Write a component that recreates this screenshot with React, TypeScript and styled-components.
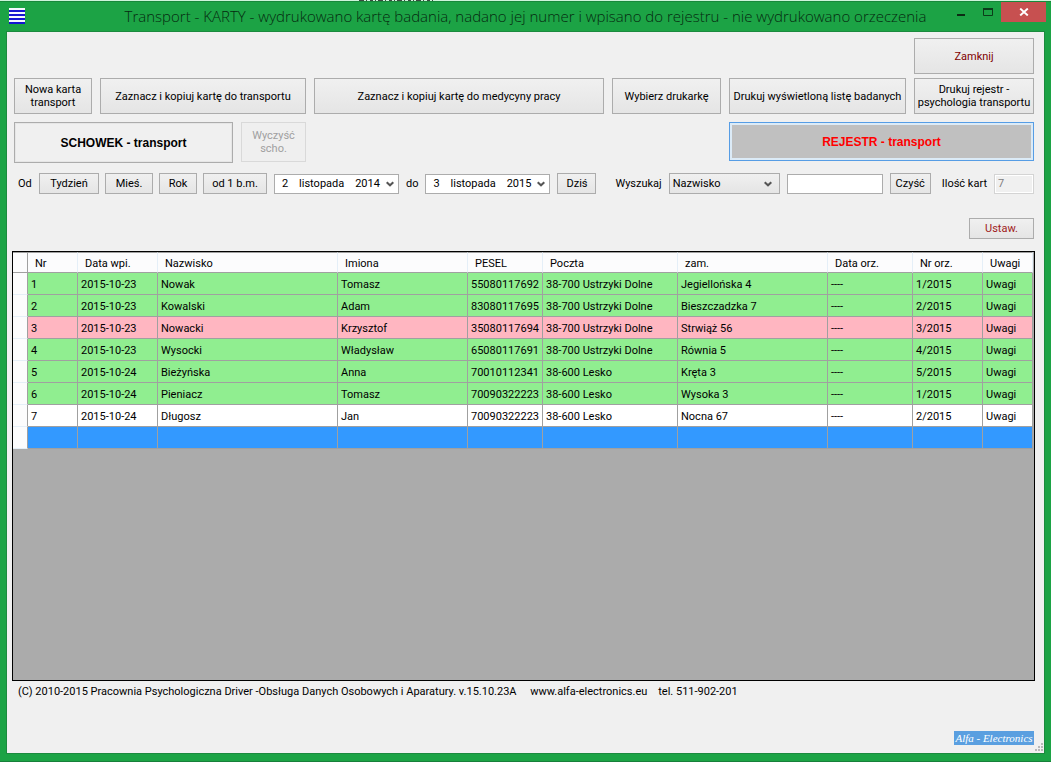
import React from "react";
import styled, { createGlobalStyle, css } from "styled-components";

const GlobalStyle = createGlobalStyle`
  *, *::before, *::after { box-sizing: border-box; }
  body {
    margin: 0;
    background: #ffffff;
    color: #000000;
    font-family: Roboto, "Liberation Sans", Arial, sans-serif;
    font-size: 11px;
    line-height: 13px;
  }
  button, input, select { font: inherit; color: inherit; margin: 0; }
`;

const Page = styled.div`
  display: flex;
  flex-direction: column;
  min-height: 100vh;
  padding: 0 3px 2px 0;
`;

const Backdrop = styled.div`
  height: 1px;
  background: #cdf5da;
  svg { display: block; margin-left: 359px; }
`;

const Window = styled.div`
  flex: 1;
  display: flex;
  flex-direction: column;
  padding: 0 6px 7px;
  background: #1ca345;
  border-top: 1px solid #17893a;
  border-bottom: 1px solid #17803a;
`;

const TitleBar = styled.header`
  display: grid;
  grid-template-columns: 1fr auto 1fr;
  height: 29px;
`;

const AppIcon = styled.svg`
  display: block;
  margin: 6px 0 0 3px;
`;

const Title = styled.h1`
  margin: 0;
  font: 300 15px/29px "Open Sans", "Noto Sans", sans-serif;
  color: #062a10;
  white-space: nowrap;
`;

const WindowButtons = styled.div`
  display: flex;
  justify-content: flex-end;
  align-items: flex-start;
  margin-right: -1px;
`;

const WindowButton = styled.button<{ $close?: boolean }>`
  display: grid;
  place-items: center;
  width: ${(p) => (p.$close ? 45 : 27)}px;
  height: 20px;
  padding: 0;
  border: 0;
  background: ${(p) => (p.$close ? "#c75050" : "transparent")};
`;

const Client = styled.main`
  flex: 1;
  display: flex;
  flex-direction: column;
  background: #f0f0f0;
  border: 1px solid #1b8a3e;
  padding: 6px 10px 0 7px;
`;

const ButtonGrid = styled.div`
  display: grid;
  grid-template-columns: 78px 206px minmax(200px, 1fr) 109px 177px 120px;
  grid-auto-rows: 36px;
  gap: 4px 8px;
`;

const Button = styled.button<{ $tone?: string; $lastColumn?: boolean }>`
  padding: 0;
  border: 1px solid #acacac;
  background: linear-gradient(#f0f0f0, #e5e5e5);
  color: ${(p) => p.$tone ?? "#000000"};
  ${(p) => p.$lastColumn && css`grid-column: -2;`}
  &:disabled {
    border-color: #d9d9d9;
    background: #efefef;
    color: #a0a0a0;
  }
`;

const SmallButton = styled(Button)<{ $width: number }>`
  flex: none;
  width: ${(p) => p.$width}px;
  height: 21px;
  padding: 0;
`;

const ModeRow = styled.div`
  display: flex;
  align-items: flex-start;
  gap: 8px;
  margin-top: 8px;
`;

const ModeButton = styled(Button)<{ $active?: boolean }>`
  width: ${(p) => (p.$active ? 305 : 219)}px;
  height: ${(p) => (p.$active ? 39 : 41)}px;
  font: bold 12px/14px "Liberation Sans", Arial, sans-serif;
  background: #f0f0f0;
  box-shadow: inset 0 0 0 1px #e6e6e6;
  ${(p) =>
    p.$active &&
    css`
      margin-left: auto;
      border-color: #569de5;
      background: #c0c0c0;
      box-shadow: inset 0 0 0 2px #dcebf7;
      color: #ff0000;
    `}
`;

const ClearButton = styled(Button)`
  width: 65px;
  height: 40px;
  padding: 0 8px;
`;

const FilterRow = styled.div`
  display: flex;
  align-items: center;
  justify-content: space-between;
  margin-top: 10px;
`;

const FilterGroup = styled.div<{ $tight?: boolean }>`
  display: flex;
  align-items: center;
  gap: ${(p) => (p.$tight ? 6 : 7)}px;
`;

const Label = styled.label`
  white-space: nowrap;
`;

const StartLabel = styled(Label)`
  width: 19px;
  padding-left: 4px;
`;

const CountLabel = styled(Label)`
  padding-left: 4px;
`;

const DateBox = styled.div`
  display: flex;
  align-items: center;
  width: 125px;
  height: 20px;
  border: 1px solid #acacac;
  background: #ffffff;
`;

const DateInput = styled.input`
  flex: 1;
  min-width: 0;
  padding: 0 0 0 7px;
  border: 0;
  background: transparent;
  outline: none;
`;

const DropButton = styled.button`
  display: grid;
  place-items: center;
  width: 16px;
  height: 18px;
  padding: 0;
  border: 0;
  background: transparent;
`;

const SelectBox = styled.div`
  display: grid;
  grid-template-columns: 1fr 16px;
  align-items: center;
  width: 111px;
  height: 21px;
  svg { grid-area: 1 / 2; pointer-events: none; z-index: 1; }
`;

const Select = styled.select`
  grid-area: 1 / 1 / 2 / 3;
  height: 21px;
  padding: 0 3px;
  appearance: none;
  border: 1px solid #acacac;
  border-radius: 0;
  background: linear-gradient(#f0f0f0, #e5e5e5);
`;

const TextInput = styled.input<{ $width: number }>`
  width: ${(p) => p.$width}px;
  height: 20px;
  padding: 0 3px;
  border: 1px solid #acacac;
  background: #ffffff;
  &:disabled {
    border-color: #d4d4d4;
    background: #f0f0f0;
    box-shadow: inset 0 0 0 1px #ffffff;
    color: #808080;
  }
`;

const SettingsRow = styled.div`
  display: flex;
  justify-content: flex-end;
  margin: 24px 0 12px;
`;

const GridPanel = styled.section`
  flex: 1;
  min-height: 200px;
  margin: 0 -1px 0 -2px;
  padding-right: 1px;
  border: 1px solid #000000;
  background: #ababab;
`;

const Table = styled.table`
  width: 100%;
  table-layout: fixed;
  border-collapse: separate;
  border-spacing: 0;
  text-align: left;
`;

const HeadCell = styled.th`
  height: 21px;
  padding: 1px 0 0 7px;
  border-right: 1px solid #e5eff8;
  border-bottom: 1px solid #a0a0a0;
  border-top: 1px solid #a0a0a0;
  background: #fcfcfd;
  font-weight: normal;
  white-space: nowrap;
  &:first-child { border-right-color: #a0a0a0; }
`;

type Tone = "done" | "alert" | "plain" | "selected";
const tones: Record<Tone, string> = {
  done: "#90ee90",
  alert: "#ffb6c1",
  plain: "#ffffff",
  selected: "#3399ff",
};

const Row = styled.tr<{ $tone: Tone }>`
  background: ${(p) => tones[p.$tone]};
`;

const Cell = styled.td`
  height: 22px;
  padding: 1px 0 0 3px;
  border-right: 1px solid #a0a0a0;
  border-bottom: 1px solid #a0a0a0;
  white-space: nowrap;
`;

const RowHeader = styled(Cell)`
  border-bottom-color: #e5eff8;
  background: #fcfcfd;
`;

const Footer = styled.footer`
  display: flex;
  flex-direction: column;
  justify-content: space-between;
  height: 72px;
  padding: 4px 0 0 4px;
`;

const Copyright = styled.p`
  margin: 0;
  white-space: pre;
`;

const BrandRow = styled.div`
  display: flex;
  justify-content: flex-end;
  align-items: flex-end;
  gap: 1px;
  margin-right: -9px;
`;

const Brand = styled.span`
  width: 80px;
  height: 14px;
  margin-bottom: 8px;
  background: #5a9fe0;
  color: #ffffff;
  font: italic 11px/14px "Liberation Serif", "Times New Roman", serif;
  text-align: center;
  white-space: nowrap;
`;

const Grip = styled.svg`
  display: block;
  margin-bottom: 2px;
`;

const Chevron = () => (
  <svg width="8" height="6" viewBox="0 0 8 6" aria-hidden="true">
    <path d="M0.7 1.2 4 4.3 7.3 1.2" fill="none" stroke="#555555" strokeWidth="2" />
  </svg>
);

const DateField = ({ id, value }: { id: string; value: string }) => (
  <DateBox>
    <DateInput id={id} defaultValue={value} />
    <DropButton aria-label="Wybierz datę">
      <Chevron />
    </DropButton>
  </DateBox>
);

const columns: [string, number][] = [
  ["Nr", 50],
  ["Data wpi.", 80],
  ["Nazwisko", 180],
  ["Imiona", 130],
  ["PESEL", 75],
  ["Poczta", 135],
  ["zam.", 150],
  ["Data orz.", 85],
  ["Nr orz.", 70],
  ["Uwagi", 50],
];

const records: { tone: Tone; cells: string[] }[] = [
  { tone: "done", cells: ["1", "2015-10-23", "Nowak", "Tomasz", "55080117692", "38-700 Ustrzyki Dolne", "Jegiellońska 4", "----", "1/2015", "Uwagi"] },
  { tone: "done", cells: ["2", "2015-10-23", "Kowalski", "Adam", "83080117695", "38-700 Ustrzyki Dolne", "Bieszczadzka 7", "----", "2/2015", "Uwagi"] },
  { tone: "alert", cells: ["3", "2015-10-23", "Nowacki", "Krzysztof", "35080117694", "38-700 Ustrzyki Dolne", "Strwiąż 56", "----", "3/2015", "Uwagi"] },
  { tone: "done", cells: ["4", "2015-10-23", "Wysocki", "Władysław", "65080117691", "38-700 Ustrzyki Dolne", "Równia 5", "----", "4/2015", "Uwagi"] },
  { tone: "done", cells: ["5", "2015-10-24", "Bieżyńska", "Anna", "70010112341", "38-600 Lesko", "Kręta 3", "----", "5/2015", "Uwagi"] },
  { tone: "done", cells: ["6", "2015-10-24", "Pieniacz", "Tomasz", "70090322223", "38-600 Lesko", "Wysoka 3", "----", "1/2015", "Uwagi"] },
  { tone: "plain", cells: ["7", "2015-10-24", "Długosz", "Jan", "70090322223", "38-600 Lesko", "Nocna 67", "----", "2/2015", "Uwagi"] },
  { tone: "selected", cells: columns.map(() => "") },
];

export default function App() {
  return (
    <Page>
      <GlobalStyle />
      <Backdrop>
        <svg width="76" height="1" aria-hidden="true">
          <path d="M0 .5H76" stroke="#3c4a40" strokeDasharray="5 2 1 3 3 2 1 2" />
        </svg>
      </Backdrop>
      <Window>
        <TitleBar>
          <AppIcon width="16" height="16" aria-hidden="true">
            <rect width="16" height="16" fill="#f4f8ff" />
            <path d="M0 3H16M0 7H16M0 11H16M0 15H16" stroke="#1414d2" strokeWidth="2" />
          </AppIcon>
          <Title>
            Transport - KARTY - wydrukowano kartę badania, nadano jej numer i wpisano do rejestru - nie wydrukowano orzeczenia
          </Title>
          <WindowButtons>
            <WindowButton aria-label="Minimalizuj">
              <svg width="8" height="8"><path d="M0 7H8" stroke="#0c2c14" strokeWidth="2" /></svg>
            </WindowButton>
            <WindowButton aria-label="Maksymalizuj">
              <svg width="10" height="8">
                <path d="M.5 1V7.5H9.5V1" fill="none" stroke="#0c3c1a" />
                <path d="M0 1H10" stroke="#0c3c1a" strokeWidth="2" />
              </svg>
            </WindowButton>
            <WindowButton $close aria-label="Zamknij okno">
              <svg width="10" height="8"><path d="M1.2.6 8.8 7.4M8.8.6 1.2 7.4" stroke="#ffffff" strokeWidth="2" /></svg>
            </WindowButton>
          </WindowButtons>
        </TitleBar>
        <Client>
          <ButtonGrid>
            <Button $tone="#800000" $lastColumn>Zamknij</Button>
            <Button>Nowa karta transport</Button>
            <Button>Zaznacz i kopiuj kartę do transportu</Button>
            <Button>Zaznacz i kopiuj kartę do medycyny pracy</Button>
            <Button>Wybierz drukarkę</Button>
            <Button>Drukuj wyświetloną listę badanych</Button>
            <Button>Drukuj rejestr - psychologia transportu</Button>
          </ButtonGrid>
          <ModeRow>
            <ModeButton>SCHOWEK - transport</ModeButton>
            <ClearButton disabled>Wyczyść scho.</ClearButton>
            <ModeButton $active>REJESTR - transport</ModeButton>
          </ModeRow>
          <FilterRow>
            <FilterGroup>
              <FilterGroup $tight>
                <StartLabel htmlFor="from">Od</StartLabel>
                <SmallButton $width={60}>Tydzień</SmallButton>
                <SmallButton $width={48}>Mieś.</SmallButton>
                <SmallButton $width={38}>Rok</SmallButton>
                <SmallButton $width={64}>od 1 b.m.</SmallButton>
              </FilterGroup>
              <DateField id="from" value="2    listopada    2014" />
              <Label htmlFor="to">do</Label>
              <DateField id="to" value="3    listopada    2015" />
              <SmallButton $width={39}>Dziś</SmallButton>
            </FilterGroup>
            <FilterGroup>
              <Label htmlFor="field">Wyszukaj</Label>
              <SelectBox>
                <Select id="field" defaultValue="Nazwisko">
                  <option>Nazwisko</option>
                </Select>
                <Chevron />
              </SelectBox>
              <TextInput $width={96} aria-label="Szukany tekst" />
              <SmallButton $width={41}>Czyść</SmallButton>
              <CountLabel htmlFor="count">Ilość kart</CountLabel>
              <TextInput id="count" $width={40} defaultValue="7" disabled />
            </FilterGroup>
          </FilterRow>
          <SettingsRow>
            <SmallButton $width={65} $tone="#a02020">Ustaw.</SmallButton>
          </SettingsRow>
          <GridPanel>
            <Table>
              <colgroup>
                <col width={15} />
                {columns.map(([name, width]) => (
                  <col key={name} width={width} />
                ))}
              </colgroup>
              <thead>
                <tr>
                  <HeadCell />
                  {columns.map(([name]) => (
                    <HeadCell key={name}>{name}</HeadCell>
                  ))}
                </tr>
              </thead>
              <tbody>
                {records.map((record, i) => (
                  <Row key={i} $tone={record.tone}>
                    <RowHeader />
                    {record.cells.map((text, j) => (
                      <Cell key={j}>{text}</Cell>
                    ))}
                  </Row>
                ))}
              </tbody>
            </Table>
          </GridPanel>
          <Footer>
            <Copyright>
              {"(C) 2010-2015 Pracownia Psychologiczna Driver -Obsługa Danych Osobowych i Aparatury. v.15.10.23A     www.alfa-electronics.eu    tel. 511-902-201"}
            </Copyright>
            <BrandRow>
              <Brand>Alfa - Electronics</Brand>
              <Grip width="8" height="8" aria-hidden="true">
                <path d="M6 0h2v2h-2zM3 3h2v2h-2zM6 3h2v2h-2zM0 6h2v2h-2zM3 6h2v2h-2zM6 6h2v2h-2z" fill="#b8b8b8" />
              </Grip>
            </BrandRow>
          </Footer>
        </Client>
      </Window>
    </Page>
  );
}
